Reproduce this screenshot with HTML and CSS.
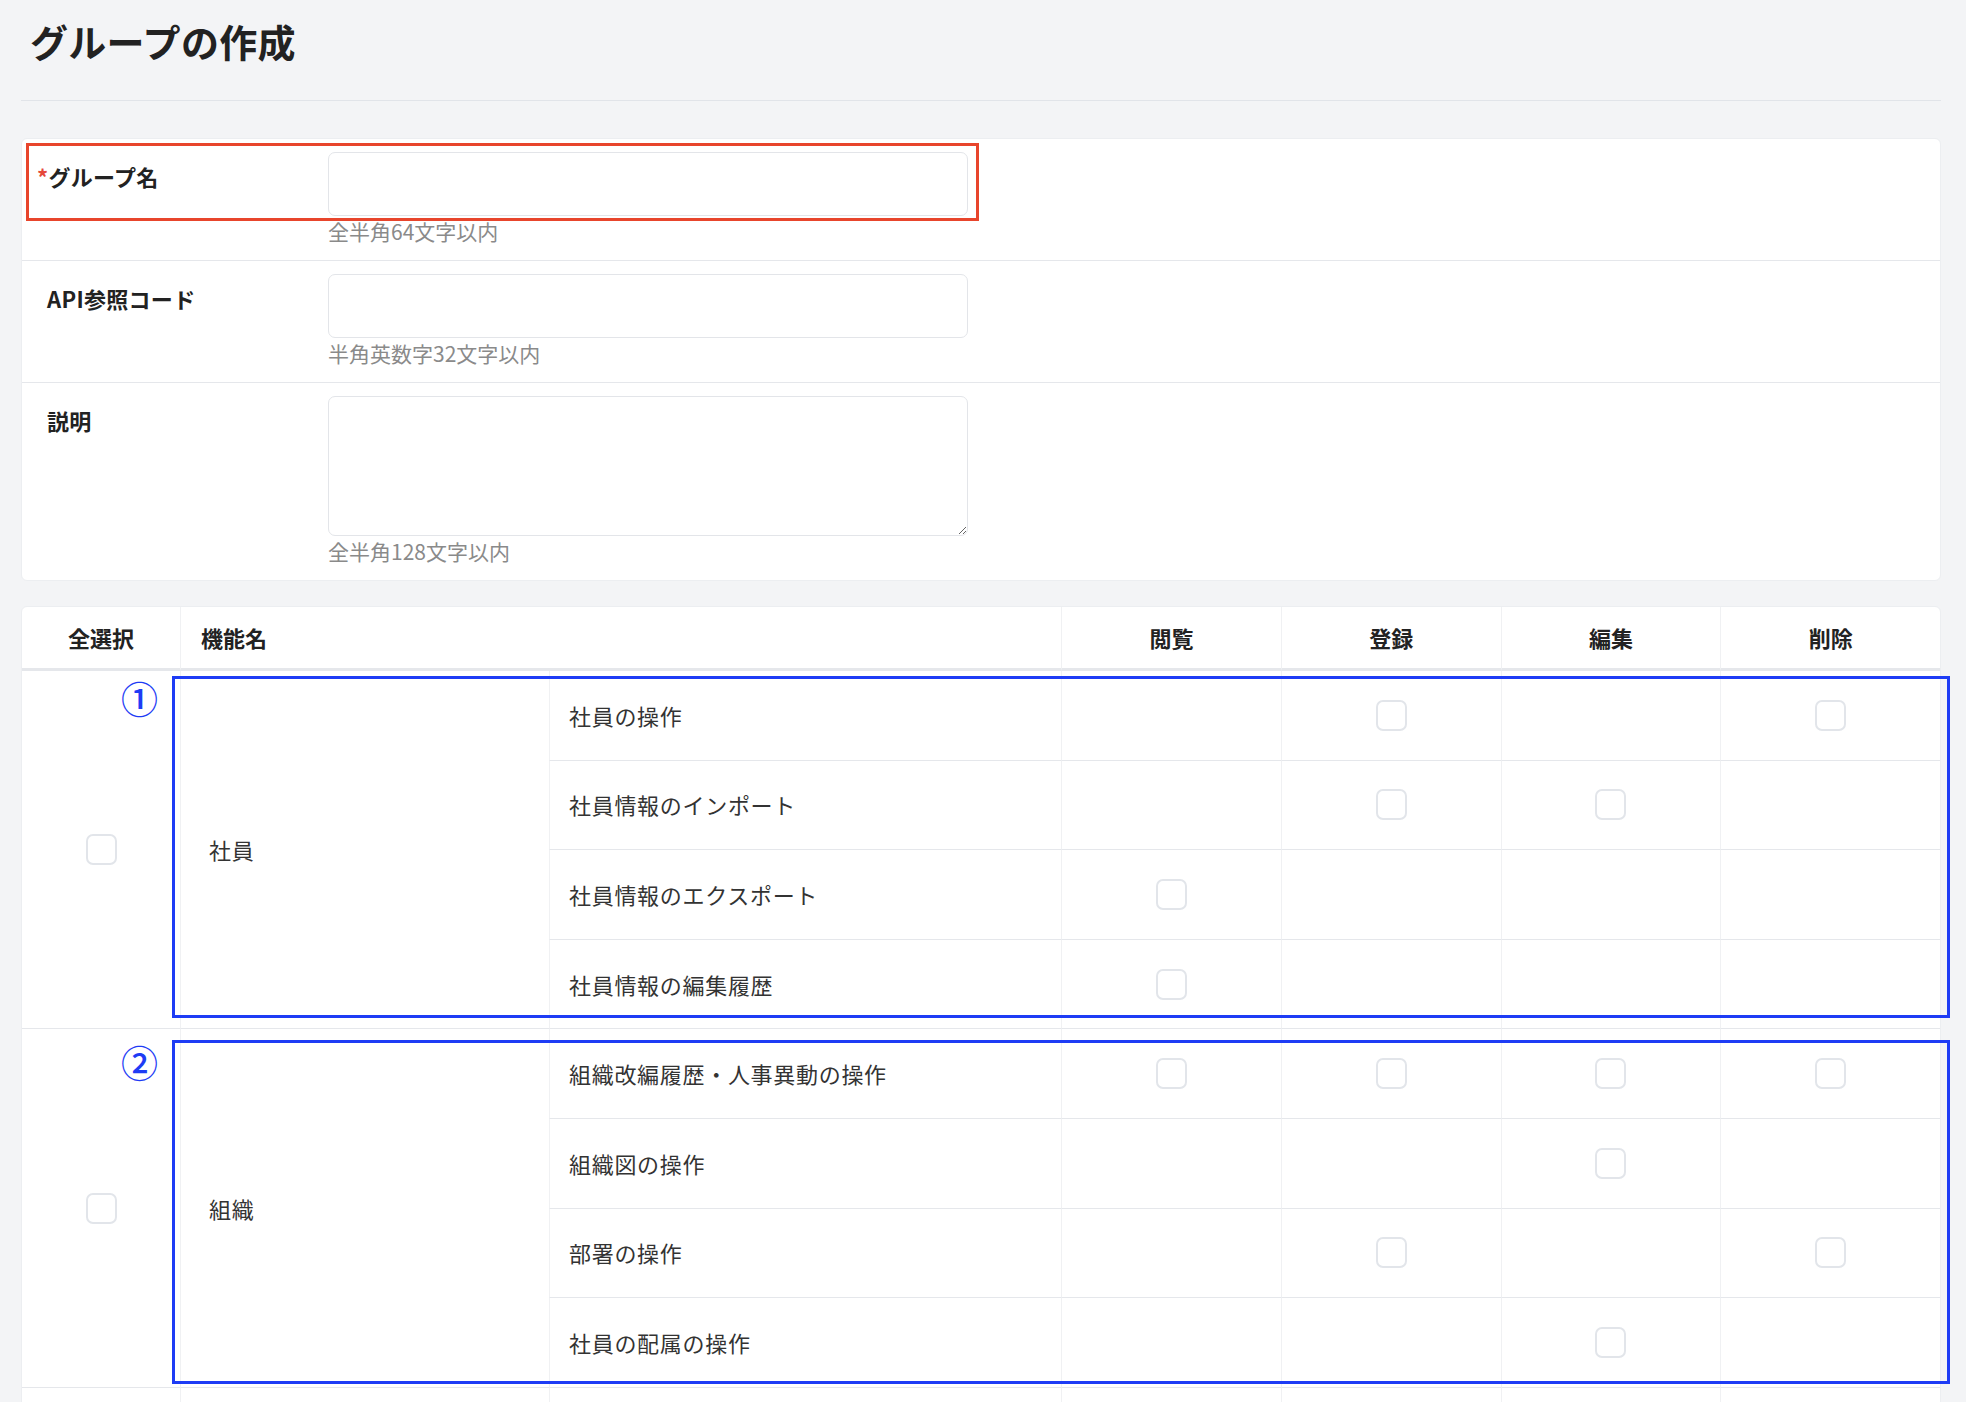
FILE: index.html
```html
<!DOCTYPE html>
<html lang="ja">
<head>
<meta charset="utf-8">
<title>グループの作成</title>
<link rel="stylesheet" href="styles.css">
</head>
<body>
<div class="page">
  <header class="page-head">
    <h1 class="title">グループの作成</h1>
  </header>

  <section class="form-card">
    <div class="form-row">
      <div class="form-label"><span class="req">*</span>グループ名</div>
      <div class="form-field">
        <input class="text-input" type="text">
        <p class="help">全半角64文字以内</p>
      </div>
      <div class="mark-red"></div>
    </div>
    <div class="form-row">
      <div class="form-label">API参照コード</div>
      <div class="form-field">
        <input class="text-input" type="text">
        <p class="help">半角英数字32文字以内</p>
      </div>
    </div>
    <div class="form-row">
      <div class="form-label">説明</div>
      <div class="form-field">
        <textarea class="text-input text-area"></textarea>
        <p class="help">全半角128文字以内</p>
      </div>
    </div>
  </section>

  <section class="table-card">
    <table class="perm">
      <colgroup>
        <col class="c-all">
        <col class="c-group">
        <col class="c-func">
        <col class="c-perm">
        <col class="c-perm">
        <col class="c-perm">
        <col class="c-perm">
      </colgroup>
      <thead>
        <tr>
          <th class="th-all">全選択</th>
          <th class="th-name" colspan="2">機能名</th>
          <th class="th-perm">閲覧</th>
          <th class="th-perm">登録</th>
          <th class="th-perm">編集</th>
          <th class="th-perm">削除</th>
        </tr>
      </thead>
      <tbody>
        <tr>
          <td class="td-all" rowspan="4">
            <input type="checkbox" class="cb">
            <span class="num num-1">①</span>
            <div class="mark-blue mark-blue-1"></div>
          </td>
          <td class="td-group" rowspan="4">社員</td>
          <td class="td-func">社員の操作</td>
          <td class="td-perm"></td>
          <td class="td-perm"><input type="checkbox" class="cb"></td>
          <td class="td-perm"></td>
          <td class="td-perm"><input type="checkbox" class="cb"></td>
        </tr>
        <tr>
          <td class="td-func">社員情報のインポート</td>
          <td class="td-perm"></td>
          <td class="td-perm"><input type="checkbox" class="cb"></td>
          <td class="td-perm"><input type="checkbox" class="cb"></td>
          <td class="td-perm"></td>
        </tr>
        <tr>
          <td class="td-func">社員情報のエクスポート</td>
          <td class="td-perm"><input type="checkbox" class="cb"></td>
          <td class="td-perm"></td>
          <td class="td-perm"></td>
          <td class="td-perm"></td>
        </tr>
        <tr>
          <td class="td-func">社員情報の編集履歴</td>
          <td class="td-perm"><input type="checkbox" class="cb"></td>
          <td class="td-perm"></td>
          <td class="td-perm"></td>
          <td class="td-perm"></td>
        </tr>

        <tr>
          <td class="td-all" rowspan="4">
            <input type="checkbox" class="cb">
            <span class="num num-2">②</span>
            <div class="mark-blue mark-blue-2"></div>
          </td>
          <td class="td-group" rowspan="4">組織</td>
          <td class="td-func">組織改編履歴・人事異動の操作</td>
          <td class="td-perm"><input type="checkbox" class="cb"></td>
          <td class="td-perm"><input type="checkbox" class="cb"></td>
          <td class="td-perm"><input type="checkbox" class="cb"></td>
          <td class="td-perm"><input type="checkbox" class="cb"></td>
        </tr>
        <tr>
          <td class="td-func">組織図の操作</td>
          <td class="td-perm"></td>
          <td class="td-perm"></td>
          <td class="td-perm"><input type="checkbox" class="cb"></td>
          <td class="td-perm"></td>
        </tr>
        <tr>
          <td class="td-func">部署の操作</td>
          <td class="td-perm"></td>
          <td class="td-perm"><input type="checkbox" class="cb"></td>
          <td class="td-perm"></td>
          <td class="td-perm"><input type="checkbox" class="cb"></td>
        </tr>
        <tr>
          <td class="td-func">社員の配属の操作</td>
          <td class="td-perm"></td>
          <td class="td-perm"></td>
          <td class="td-perm"><input type="checkbox" class="cb"></td>
          <td class="td-perm"></td>
        </tr>

        <tr>
          <td class="td-all" rowspan="2"></td>
          <td class="td-group" rowspan="2"></td>
          <td class="td-func"></td>
          <td class="td-perm"></td>
          <td class="td-perm"></td>
          <td class="td-perm"></td>
          <td class="td-perm"></td>
        </tr>
        <tr>
          <td class="td-func"></td>
          <td class="td-perm"></td>
          <td class="td-perm"></td>
          <td class="td-perm"></td>
          <td class="td-perm"></td>
        </tr>
      </tbody>
    </table>
  </section>
</div>
</body>
</html>
```

FILE: styles.css
```css
html, body {
  margin: 0;
  padding: 0;
}

body {
  background: #f3f4f6;
  font-family: "Noto Sans CJK JP", "Noto Sans", "Liberation Sans", sans-serif;
  color: #333;
}

.page {
  padding: 0 25px 40px 21px;
}

/* ---------- page header ---------- */
.page-head {
  padding: 12px 0 31px;
  border-bottom: 1px solid #e1e4e9;
}

.title {
  margin: 0;
  padding-left: 9px;
  font-size: 38px;
  line-height: 57px;
  font-weight: 700;
  letter-spacing: 0.3px;
  color: #222;
}

/* ---------- form card ---------- */
.form-card {
  margin-top: 37px;
  background: #fff;
  border: 1px solid #eceef1;
  border-radius: 6px;
}

.form-row {
  position: relative;
  display: flex;
  padding: 13px 25px 14px;
  border-bottom: 1px solid #e5e7eb;
}

.form-row:last-child {
  border-bottom: none;
}

.form-label {
  flex: none;
  width: 281px;
  padding-top: 8px;
  font-size: 22px;
  line-height: 33px;
  font-weight: 700;
  letter-spacing: 0.3px;
  color: #222;
}

.req {
  color: #e5483a;
  margin-left: -10px;
}

.form-field {
  width: 640px;
}

.text-input {
  display: block;
  box-sizing: border-box;
  width: 640px;
  height: 64px;
  margin: 0;
  padding: 0 12px;
  border: 1px solid #e3e5e9;
  border-radius: 7px;
  background: #fff;
  font: inherit;
  font-size: 20px;
}

.text-area {
  height: 140px;
  padding: 10px 12px;
}

.help {
  margin: 0;
  font-size: 21px;
  line-height: 30px;
  color: #8a8a8a;
}

.mark-red {
  position: absolute;
  left: 4px;
  top: 4px;
  width: 953px;
  height: 78px;
  box-sizing: border-box;
  border: 3px solid #e8452c;
  pointer-events: none;
}

/* ---------- permission table ---------- */
.table-card {
  margin-top: 25px;
  background: #fff;
  border: 1px solid #eceef1;
  border-radius: 6px;
}

.perm {
  width: 100%;
  table-layout: fixed;
  border-collapse: separate;
  border-spacing: 0;
}

.c-all { width: 158px; }
.c-group { width: 369px; }
.c-func { width: 512px; }
.c-perm { width: 219.75px; }

.perm th,
.perm td {
  box-sizing: border-box;
  padding: 0;
  vertical-align: middle;
}

.perm th {
  height: 64px;
  font-size: 22px;
  line-height: 33px;
  font-weight: 700;
  color: #222;
  text-align: center;
  border-bottom: 3px solid #e5e7eb;
}

.th-name {
  text-align: left !important;
  padding-left: 20px !important;
  border-left: 1px solid #f0f1f3;
}

.th-perm {
  border-left: 1px solid #f0f1f3;
}

.perm td {
  font-size: 22px;
  line-height: 33px;
  letter-spacing: 0.7px;
  color: #333;
  border-bottom: 1px solid #e5e7eb;
}

.td-func,
.td-perm {
  height: 89.6px;
}

.td-all {
  position: relative;
}

.td-group {
  padding-left: 28px !important;
  border-left: 1px solid #f0f1f3;
}

.td-func {
  padding-left: 19px !important;
  border-left: 1px solid #f0f1f3;
}

.td-perm {
  border-left: 1px solid #f0f1f3;
}

.cb {
  -webkit-appearance: none;
  appearance: none;
  display: block;
  box-sizing: border-box;
  width: 31px;
  height: 31px;
  margin: 0 auto;
  border: 2.5px solid #e2e5ea;
  border-radius: 7px;
  background: #fff;
}

.num {
  position: absolute;
  right: 22px;
  font-size: 37px;
  line-height: 37px;
  font-weight: 500;
  letter-spacing: 0;
  color: #1e3cf5;
}

.num-1 { top: 9px; }
.num-2 { top: 15px; }

.mark-blue {
  position: absolute;
  left: 150px;
  width: 1778px;
  box-sizing: border-box;
  border: 3px solid #1e3cf5;
  pointer-events: none;
}

.mark-blue-1 {
  top: 5px;
  height: 342px;
}

.mark-blue-2 {
  top: 11px;
  height: 344px;
}
```
